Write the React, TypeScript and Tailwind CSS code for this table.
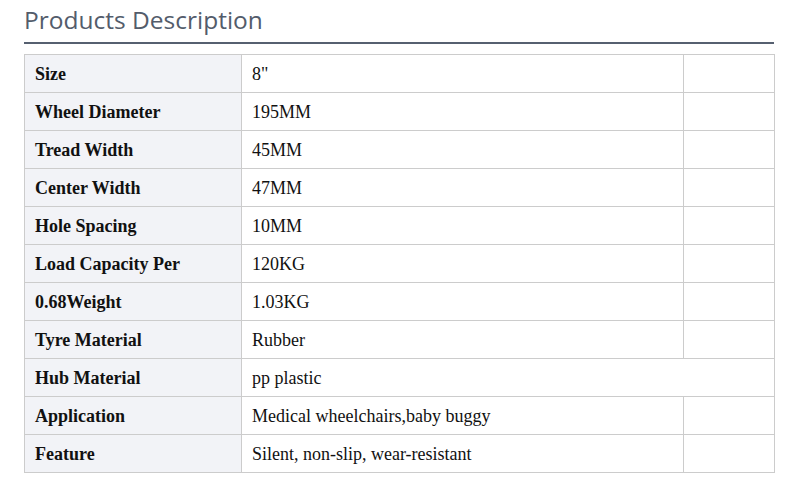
const rows: { label: string; value: string; span?: boolean }[] = [
  { label: "Size", value: "8\"" },
  { label: "Wheel Diameter", value: "195MM" },
  { label: "Tread Width", value: "45MM" },
  { label: "Center Width", value: "47MM" },
  { label: "Hole Spacing", value: "10MM" },
  { label: "Load Capacity Per", value: "120KG" },
  { label: "0.68Weight", value: "1.03KG" },
  { label: "Tyre Material", value: "Rubber" },
  { label: "Hub Material", value: "pp plastic", span: true },
  { label: "Application", value: "Medical wheelchairs,baby buggy" },
  { label: "Feature", value: "Silent, non-slip, wear-resistant" },
];

const cell = "border border-[#cccccc] px-[10px] pt-[2px] font-['Liberation_Serif',serif] text-[18px] text-[#111]";

export default function App() {
  return (
    <div className="min-h-screen bg-white px-6 pt-[3px]">
      <div className="w-[750px]">
        <h2 className="border-b-2 border-[#566070] pb-[5px] font-['Open_Sans',sans-serif] text-[24.5px] leading-[34px] text-[#535c6b]">
          Products Description
        </h2>
        <table className="mt-[10px] w-[750px] table-fixed border-collapse">
          <colgroup>
            <col className="w-[217px]" />
            <col className="w-[442px]" />
            <col className="w-[91px]" />
          </colgroup>
          <tbody>
            {rows.map((r) => (
              <tr key={r.label} className="h-[38px]">
                <td className={`${cell} bg-[#f2f3f7] font-bold`}>{r.label}</td>
                <td colSpan={r.span ? 2 : 1} className={cell}>
                  {r.value}
                </td>
                {!r.span && <td className="border border-[#cccccc]" />}
              </tr>
            ))}
          </tbody>
        </table>
      </div>
    </div>
  );
}
